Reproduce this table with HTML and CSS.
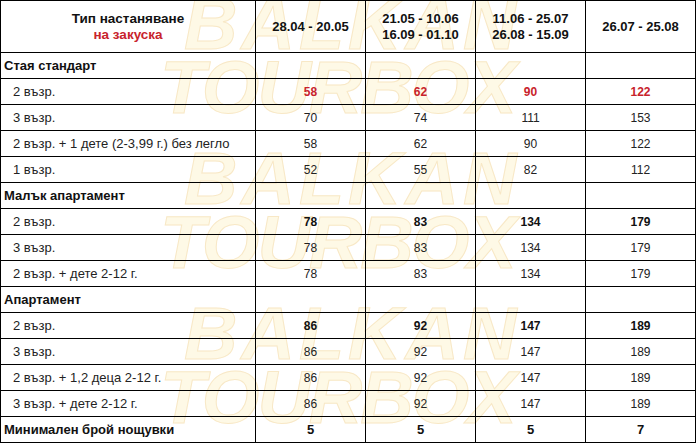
FILE: index.html
```html
<!DOCTYPE html>
<html lang="bg">
<head>
<meta charset="utf-8">
<title>Цени</title>
<link rel="stylesheet" href="styles.css">
</head>
<body>
<div class="wrap">
  <div class="wm wm1" aria-hidden="true"><div class="wm-a">BALKAN</div><div class="wm-b">TOURBOX</div></div>
  <div class="wm wm2" aria-hidden="true"><div class="wm-a">BALKAN</div><div class="wm-b">TOURBOX</div></div>
  <div class="wm wm3" aria-hidden="true"><div class="wm-a">BALKAN</div><div class="wm-b">TOURBOX</div></div>
  <table class="prices">
    <colgroup>
      <col class="c-name"><col class="c-val"><col class="c-val"><col class="c-val"><col class="c-val">
    </colgroup>
    <tr class="head">
      <td class="h-name">Тип настаняване<br><span class="red">на закуска</span></td>
      <td>28.04 - 20.05</td>
      <td>21.05 - 10.06<br>16.09 - 01.10</td>
      <td>11.06 - 25.07<br>26.08 - 15.09</td>
      <td>26.07 - 25.08</td>
    </tr>
    <tr class="group"><td>Стая стандарт</td><td></td><td></td><td></td><td></td></tr>
    <tr class="sub red-row"><td>2 възр.</td><td>58</td><td>62</td><td>90</td><td>122</td></tr>
    <tr class="sub"><td>3 възр.</td><td>70</td><td>74</td><td>111</td><td>153</td></tr>
    <tr class="sub"><td>2 възр. + 1 дете (2-3,99 г.) без легло</td><td>58</td><td>62</td><td>90</td><td>122</td></tr>
    <tr class="sub"><td>1 възр.</td><td>52</td><td>55</td><td>82</td><td>112</td></tr>
    <tr class="group"><td>Малък апартамент</td><td></td><td></td><td></td><td></td></tr>
    <tr class="sub bold-row"><td>2 възр.</td><td>78</td><td>83</td><td>134</td><td>179</td></tr>
    <tr class="sub"><td>3 възр.</td><td>78</td><td>83</td><td>134</td><td>179</td></tr>
    <tr class="sub"><td>2 възр. + дете 2-12 г.</td><td>78</td><td>83</td><td>134</td><td>179</td></tr>
    <tr class="group"><td>Апартамент</td><td></td><td></td><td></td><td></td></tr>
    <tr class="sub bold-row"><td>2 възр.</td><td>86</td><td>92</td><td>147</td><td>189</td></tr>
    <tr class="sub"><td>3 възр.</td><td>86</td><td>92</td><td>147</td><td>189</td></tr>
    <tr class="sub"><td>2 възр. + 1,2 деца 2-12 г.</td><td>86</td><td>92</td><td>147</td><td>189</td></tr>
    <tr class="sub"><td>3 възр. + дете 2-12 г.</td><td>86</td><td>92</td><td>147</td><td>189</td></tr>
    <tr class="group min"><td>Минимален брой нощувки</td><td>5</td><td>5</td><td>5</td><td>7</td></tr>
  </table>
</div>
</body>
</html>
```

FILE: styles.css
```css
html, body {
  margin: 0;
  padding: 0;
  background: #fff;
}

.wrap {
  position: relative;
  width: 696px;
  height: 443px;
  overflow: hidden;
}

.wm {
  position: absolute;
  z-index: 0;
  font-family: "Liberation Sans", Arial, sans-serif;
  font-weight: bold;
  font-style: italic;
  font-size: 74px;
  line-height: 58px;
  color: #fef9e6;
  -webkit-text-stroke: 1px #f8e8c6;
  white-space: nowrap;
  pointer-events: none;
  user-select: none;
}
.wm-a { padding-left: 24px; letter-spacing: 4px; }
.wm-b { letter-spacing: -2px; margin-top: 6px; }
.wm1 { left: 160px; top: -5px; }
.wm2 { left: 160px; top: 150px; }
.wm3 { left: 160px; top: 305px; }

.prices {
  position: relative;
  z-index: 1;
  border-collapse: collapse;
  table-layout: fixed;
  width: 696px;
  font-family: "Liberation Sans", Arial, sans-serif;
  font-size: 12px;
  color: #222;
  background: transparent;
}

.c-name { width: 255px; }
.c-val { width: 110px; }

.prices td {
  border: 1px solid #000;
  height: 25px;
  padding: 0;
  text-align: center;
  vertical-align: middle;
  line-height: 16px;
}

.prices td:first-child {
  text-align: left;
  font-size: 13px;
}

.head td {
  height: 51px;
  font-weight: bold;
  font-size: 13px;
  color: #111;
}
.prices .head td.h-name { text-align: center; font-size: 13.5px; }

.red { color: #c8232c; }

.group td {
  font-weight: bold;
  color: #111;
}
.prices .group td:first-child { padding-left: 3px; font-size: 13px; }
.min td { font-size: 13px; }

.sub td:first-child { padding-left: 12px; }

.red-row td { color: #c8232c; font-weight: bold; }
.red-row td:first-child { color: #222; font-weight: normal; }

.bold-row td { font-weight: bold; color: #111; }
.bold-row td:first-child { font-weight: normal; color: #222; }
```
